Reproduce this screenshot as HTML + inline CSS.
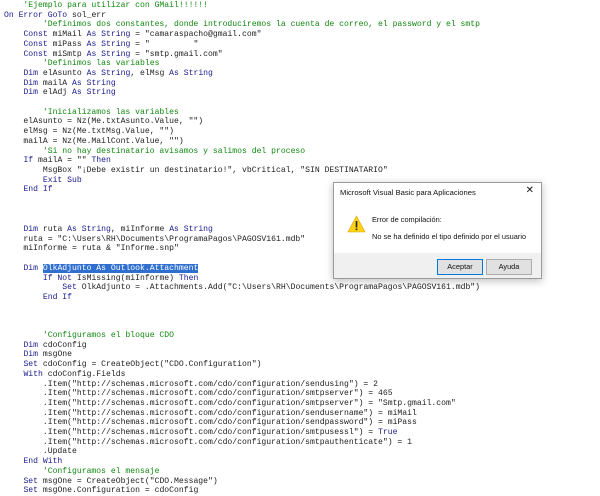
<!DOCTYPE html>
<html><head><meta charset="utf-8"><style>
body{margin:0;width:600px;height:495px;background:#fff;position:relative;overflow:hidden}
.c{position:absolute;left:4px;font-family:"Liberation Mono",monospace;font-size:8.1px;line-height:9.7px;white-space:pre;color:#222}
.k{color:#1a1a8c}.g{color:#118811}
.sel{background:#2f6fd0;color:#fff}
.dlg{position:absolute;left:333px;top:182px;width:207px;height:95px;background:#fff;border:1px solid #9a9a9a;box-shadow:0 2px 8px rgba(0,0,0,.25);font-family:"Liberation Sans",sans-serif;font-size:7.4px;color:#111}
.t{position:absolute;line-height:10px}
.btn{position:absolute;top:76px;height:14px;width:44px;border:1px solid #adadad;background:#e1e1e1;text-align:center;line-height:14px;font-size:7.4px}
</style></head><body>
<div class="c" style="top:1px"><span class="g">    'Ejemplo para utilizar con GMail!!!!!!</span>
<span class="k">On Error GoTo</span> sol_err
<span class="g">        'Definimos dos constantes, donde introduciremos la cuenta de correo, el password y el smtp</span>
    <span class="k">Const</span> miMail <span class="k">As String</span> = "camaraspacho@gmail.com"
    <span class="k">Const</span> miPass <span class="k">As String</span> = "         "
    <span class="k">Const</span> miSmtp <span class="k">As String</span> = "smtp.gmail.com"
<span class="g">        'Definimos las variables</span>
    <span class="k">Dim</span> elAsunto <span class="k">As String</span>, elMsg <span class="k">As String</span>
    <span class="k">Dim</span> mailA <span class="k">As String</span>
    <span class="k">Dim</span> elAdj <span class="k">As String</span>

<span class="g">        'Inicializamos las variables</span>
    elAsunto = Nz(Me.txtAsunto.Value, "")
    elMsg = Nz(Me.txtMsg.Value, "")
    mailA = Nz(Me.MailCont.Value, "")
<span class="g">        'Si no hay destinatario avisamos y salimos del proceso</span>
    <span class="k">If</span> mailA = "" <span class="k">Then</span>
        MsgBox "¡Debe existir un destinatario!", vbCritical, "SIN DESTINATARIO"
        <span class="k">Exit Sub</span>
    <span class="k">End If</span></div>
<div class="c" style="top:225px">    <span class="k">Dim</span> ruta <span class="k">As String</span>, miInforme <span class="k">As String</span>
    ruta = "C:\Users\RH\Documents\ProgramaPagos\PAGOSV161.mdb"
    miInforme = ruta &amp; "Informe.snp"

    <span class="k">Dim</span> <span class="sel">OlkAdjunto As Outlook.Attachment</span>
        <span class="k">If Not</span> IsMissing(miInforme) <span class="k">Then</span>
            <span class="k">Set</span> OlkAdjunto = .Attachments.Add("C:\Users\RH\Documents\ProgramaPagos\PAGOSV161.mdb")
        <span class="k">End If</span></div>
<div class="c" style="top:331px"><span class="g">        'Configuramos el bloque CDO</span>
    <span class="k">Dim</span> cdoConfig
    <span class="k">Dim</span> msgOne
    <span class="k">Set</span> cdoConfig = CreateObject("CDO.Configuration")
    <span class="k">With</span> cdoConfig.Fields
        .Item("http://schemas.microsoft.com/cdo/configuration/sendusing") = 2
        .Item("http://schemas.microsoft.com/cdo/configuration/smtpserver") = 465
        .Item("http://schemas.microsoft.com/cdo/configuration/smtpserver") = "Smtp.gmail.com"
        .Item("http://schemas.microsoft.com/cdo/configuration/sendusername") = miMail
        .Item("http://schemas.microsoft.com/cdo/configuration/sendpassword") = miPass
        .Item("http://schemas.microsoft.com/cdo/configuration/smtpusessl") = <span class="k">True</span>
        .Item("http://schemas.microsoft.com/cdo/configuration/smtpauthenticate") = 1
        .Update
    <span class="k">End With</span>
<span class="g">        'Configuramos el mensaje</span>
    <span class="k">Set</span> msgOne = CreateObject("CDO.Message")
    <span class="k">Set</span> msgOne.Configuration = cdoConfig</div>
<div class="dlg">
<div class="t" style="left:6px;top:5px;font-size:7.6px">Microsoft Visual Basic para Aplicaciones</div>
<div class="t" style="right:7px;top:3px;font-size:10px">✕</div>
<svg style="position:absolute;left:13px;top:32px" width="19" height="18" viewBox="0 0 19 18"><path d="M9.5 1 L18 17 L1 17 Z" fill="#fcd116" stroke="#d9a600" stroke-width=".6"/><rect x="8.7" y="6" width="1.6" height="6.5" fill="#222"/><rect x="8.7" y="13.5" width="1.6" height="1.6" fill="#222"/></svg>
<div class="t" style="left:38px;top:32px">Error de compilación:</div>
<div class="t" style="left:38px;top:49px">No se ha definido el tipo definido por el usuario</div>
<div style="position:absolute;left:0;right:0;bottom:0;height:25px;background:#f0f0f0"></div>
<div class="btn" style="left:103px;border:1px solid #0078d7">Aceptar</div>
<div class="btn" style="left:152px">Ayuda</div>
</div>
</body></html>
